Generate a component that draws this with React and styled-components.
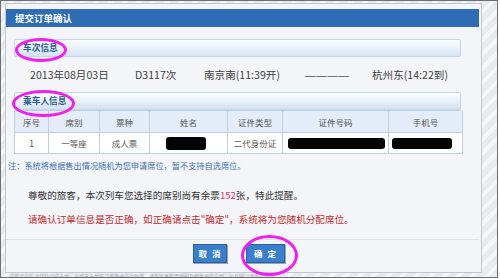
import React from "react";
import styled, { createGlobalStyle } from "styled-components";

const Global = createGlobalStyle`
  html, body { margin: 0; padding: 0; background: #ffffff; }
  body { font-family: "Noto Sans CJK SC", "Noto Sans", sans-serif; }
  * { box-sizing: border-box; }
`;

const Frame = styled.div`
  position: relative;
  width: 498px;
  height: 278px;
  border: 1px solid #6f6f6f;
  overflow: hidden;
  padding: 2px 0 0 4px;
  background: repeating-linear-gradient(
    135deg,
    #e7eaee 0px,
    #e7eaee 6px,
    #f5f6f8 6px,
    #f5f6f8 10px
  );
`;

const Dialog = styled.div`
  width: 477px;
  height: 270px;
  border: 1px solid #bfc6cf;
  background: #f3f5f8;
  padding: 5px 2px 0 0;
  display: flex;
  flex-direction: column;
`;

const TitleBar = styled.div`
  height: 18px;
  background: #2e6cb4;
  color: #ffffff;
  font-size: 9.5px;
  font-weight: 700;
  line-height: 18px;
  padding-left: 9px;
`;

const Body = styled.div`
  display: flex;
  flex-direction: column;
  padding: 12px 0 0 0;
  flex: 1;
`;

const SectionHeader = styled.div`
  margin: 0 18px 0 8px;
  height: 18px;
  border: 1px solid #c7d6e7;
  border-radius: 2px;
  background: linear-gradient(#fdfeff, #d4e2f2);
  color: #2b5a8e;
  font-size: 8.7px;
  font-weight: 700;
  line-height: 16px;
  padding-left: 8px;
`;

const TrainRow = styled.div`
  margin: 0 18px 0 8px;
  height: 35px;
  display: grid;
  grid-template-columns: 105px 69px 101px 67px auto;
  align-items: center;
  padding-left: 16px;
  color: #3f3f3f;
  font-size: 10.6px;
`;

const Dashes = styled.span`
  color: #555;
  font-family: "Liberation Sans", sans-serif;
  letter-spacing: 0.5px;
`;

const Table = styled.div`
  margin: 0 18px 0 8px;
  display: grid;
  grid-template-columns: 34px 51px 50px 78px 55px 106px 74px;
  border-left: 1px solid #bcd0e5;
  border-top: 1px solid #bcd0e5;
`;

const Cell = styled.div`
  height: ${(p) => (p.$head ? 22 : 21)}px;
  border-right: 1px solid #bcd0e5;
  border-bottom: 1px solid #bcd0e5;
  background: ${(p) => (p.$head ? "#e3ecf7" : "#ffffff")};
  display: flex;
  align-items: center;
  justify-content: center;
  font-size: 8.5px;
  color: #555;
`;

const Redact = styled.span`
  display: block;
  width: ${(p) => p.$w}px;
  height: ${(p) => p.$h}px;
  background: #050505;
  border-radius: 3px;
  margin-left: ${(p) => p.$ml || 0}px;
`;

const Note = styled.div`
  height: 22px;
  line-height: 22px;
  padding-left: 2px;
  color: #3b6fb3;
  font-size: 8.2px;
`;

const Message = styled.div`
  padding-left: 22px;
  margin-top: ${(p) => p.$mt}px;
  height: 20px;
  line-height: 20px;
  font-size: 9.6px;
  color: ${(p) => (p.$red ? "#c42a2a" : "#333333")};
`;

const Count = styled.span`
  color: #e2336d;
`;

const Footer = styled.div`
  margin-top: 10px;
  border-top: 1px solid #dde1e6;
  padding: 4px 8px 0 0;
  display: flex;
  justify-content: center;
  gap: 19px;
`;

const Button = styled.button`
  width: ${(p) => p.$w}px;
  height: 19px;
  padding: 0;
  background: #3a7fcc;
  border: 1px solid #2c609e;
  box-shadow: 1px 1px 0 #9aa6b4;
  color: #ffffff;
  font-family: "Noto Sans CJK SC", sans-serif;
  font-size: 8.5px;
  font-weight: 700;
  letter-spacing: 5px;
  text-indent: 5px;
  line-height: 17px;
`;

const BottomText = styled.div`
  margin-top: 0;
  padding-left: 4px;
  font-size: 5px;
  line-height: 5px;
  height: 5px;
  color: #a2a6ab;
  white-space: nowrap;
`;

const Ring = styled.div`
  position: absolute;
  left: ${(p) => p.$x}px;
  top: ${(p) => p.$y}px;
  width: ${(p) => p.$w}px;
  height: ${(p) => p.$h}px;
  border: 3px solid #f01ef0;
  border-radius: 50%;
  pointer-events: none;
`;

const heads = ["序号", "席别", "票种", "姓名", "证件类型", "证件号码", "手机号"];

export default function App() {
  return (
    <>
      <Global />
      <Frame>
        <Dialog>
          <TitleBar>提交订单确认</TitleBar>
          <Body>
            <SectionHeader>车次信息</SectionHeader>
            <TrainRow>
              <span>2013年08月03日</span>
              <span>D3117次</span>
              <span>南京南(11:39开)</span>
              <Dashes>————</Dashes>
              <span>杭州东(14:22到)</span>
            </TrainRow>
            <SectionHeader>乘车人信息</SectionHeader>
            <Table>
              {heads.map((h) => (
                <Cell $head key={h}>
                  {h}
                </Cell>
              ))}
              <Cell>1</Cell>
              <Cell>一等座</Cell>
              <Cell>成人票</Cell>
              <Cell>
                <Redact $w={40} $h={13} $ml={-6} />
              </Cell>
              <Cell>二代身份证</Cell>
              <Cell>
                <Redact $w={97} $h={11} $ml={2} />
              </Cell>
              <Cell>
                <Redact $w={60} $h={11} $ml={-7} />
              </Cell>
            </Table>
            <Note>注：系统将根据售出情况随机为您申请席位，暂不支持自选席位。</Note>
            <Message $mt={9}>
              尊敬的旅客，本次列车您选择的席别尚有余票<Count>152</Count>张，特此提醒。
            </Message>
            <Message $mt={4} $red>
              请确认订单信息是否正确，如正确请点击"确定"，系统将为您随机分配席位。
            </Message>
            <Footer>
              <Button $w={34}>取消</Button>
              <Button $w={39}>确定</Button>
            </Footer>
          </Body>
        </Dialog>
        <BottomText>
          订单提交后请尽快完成支付，逾期未支付的订单将被自动取消，请您留意购票须知及相关规定说明，如有疑问请咨询客服。
        </BottomText>
        <Ring $x={14} $y={37} $w={52} $h={24} />
        <Ring $x={11} $y={89} $w={63} $h={27} />
        <Ring $x={240} $y={234} $w={57} $h={41} />
      </Frame>
    </>
  );
}
